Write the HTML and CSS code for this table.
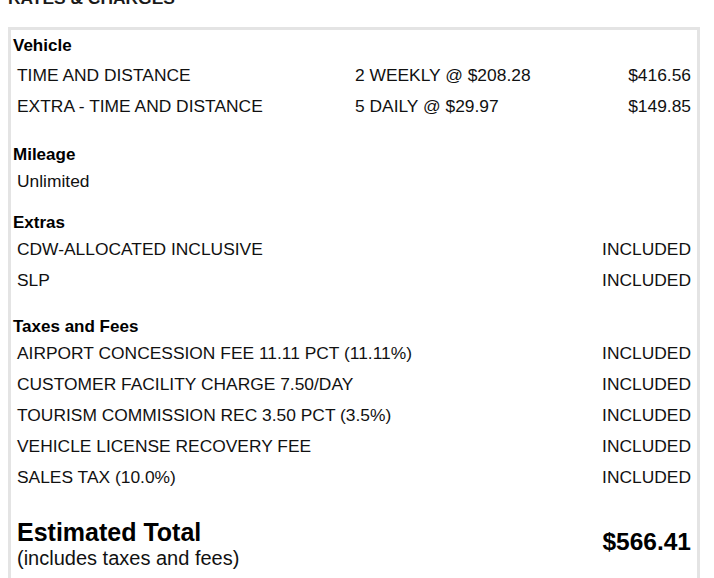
FILE: index.html
```html
<!DOCTYPE html>
<html lang="en">
<head>
<meta charset="utf-8">
<title>Rates &amp; Charges</title>
<link rel="stylesheet" href="styles.css">
</head>
<body>
<h2 class="page-title">RATES &amp; CHARGES</h2>
<div class="charges">
  <section class="group group-vehicle">
    <h3 class="group-title">Vehicle</h3>
    <div class="row"><span class="name">TIME AND DISTANCE</span><span class="rate">2 WEEKLY @ $208.28</span><span class="amount">$416.56</span></div>
    <div class="row"><span class="name">EXTRA - TIME AND DISTANCE</span><span class="rate">5 DAILY @ $29.97</span><span class="amount">$149.85</span></div>
  </section>
  <section class="group">
    <h3 class="group-title">Mileage</h3>
    <div class="note">Unlimited</div>
  </section>
  <section class="group group-extras">
    <h3 class="group-title">Extras</h3>
    <div class="row"><span class="name">CDW-ALLOCATED INCLUSIVE</span><span class="rate"></span><span class="amount">INCLUDED</span></div>
    <div class="row"><span class="name">SLP</span><span class="rate"></span><span class="amount">INCLUDED</span></div>
  </section>
  <section class="group">
    <h3 class="group-title">Taxes and Fees</h3>
    <div class="row"><span class="name">AIRPORT CONCESSION FEE 11.11 PCT (11.11%)</span><span class="rate"></span><span class="amount">INCLUDED</span></div>
    <div class="row"><span class="name">CUSTOMER FACILITY CHARGE 7.50/DAY</span><span class="rate"></span><span class="amount">INCLUDED</span></div>
    <div class="row"><span class="name">TOURISM COMMISSION REC 3.50 PCT (3.5%)</span><span class="rate"></span><span class="amount">INCLUDED</span></div>
    <div class="row"><span class="name">VEHICLE LICENSE RECOVERY FEE</span><span class="rate"></span><span class="amount">INCLUDED</span></div>
    <div class="row"><span class="name">SALES TAX (10.0%)</span><span class="rate"></span><span class="amount">INCLUDED</span></div>
  </section>
  <div class="total">
    <div class="total-label">
      <div class="total-title">Estimated Total</div>
      <div class="total-sub">(includes taxes and fees)</div>
    </div>
    <div class="total-amount">$566.41</div>
  </div>
</div>
</body>
</html>
```
FILE: styles.css
```css
html, body {
  margin: 0;
  padding: 0;
  background: #ffffff;
}
body {
  font-family: "Liberation Sans", Arial, sans-serif;
  color: #111111;
  font-size: 17.4px;
  overflow: hidden;
}
.page-title {
  margin: -12px 0 19px 8px;
  font-size: 17.4px;
  line-height: 20px;
  font-weight: bold;
  color: #1a1a1a;
}
.charges {
  margin: 0 14px 0 8px;
  border: 3px solid #e4e4e4;
  padding: 4px 6px 40px 2px;
}
.group {
  margin-bottom: 20px;
}
.group-vehicle {
  margin-bottom: 21px;
}
.group-extras {
  margin-bottom: 19px;
}
.group-title {
  margin: 0;
  font-size: 17px;
  line-height: 23px;
  font-weight: bold;
  color: #000000;
}
.group-vehicle .group-title {
  margin-bottom: 3px;
}
.row {
  display: grid;
  grid-template-columns: 338px 1fr auto;
  padding: 6px 0 6px 4px;
  line-height: 19px;
  white-space: nowrap;
}
.amount {
  text-align: right;
}
.note {
  padding: 6px 0 0 4px;
  line-height: 19px;
}
.total {
  display: flex;
  justify-content: space-between;
  align-items: center;
  margin-top: 25px;
  padding-left: 4px;
}
.total-title {
  font-size: 25px;
  line-height: 29px;
  font-weight: bold;
  color: #000000;
}
.total-sub {
  font-size: 20px;
  line-height: 23px;
}
.total-amount {
  font-size: 24.5px;
  line-height: 28px;
  font-weight: bold;
  color: #000000;
  margin-bottom: 4px;
}
```
